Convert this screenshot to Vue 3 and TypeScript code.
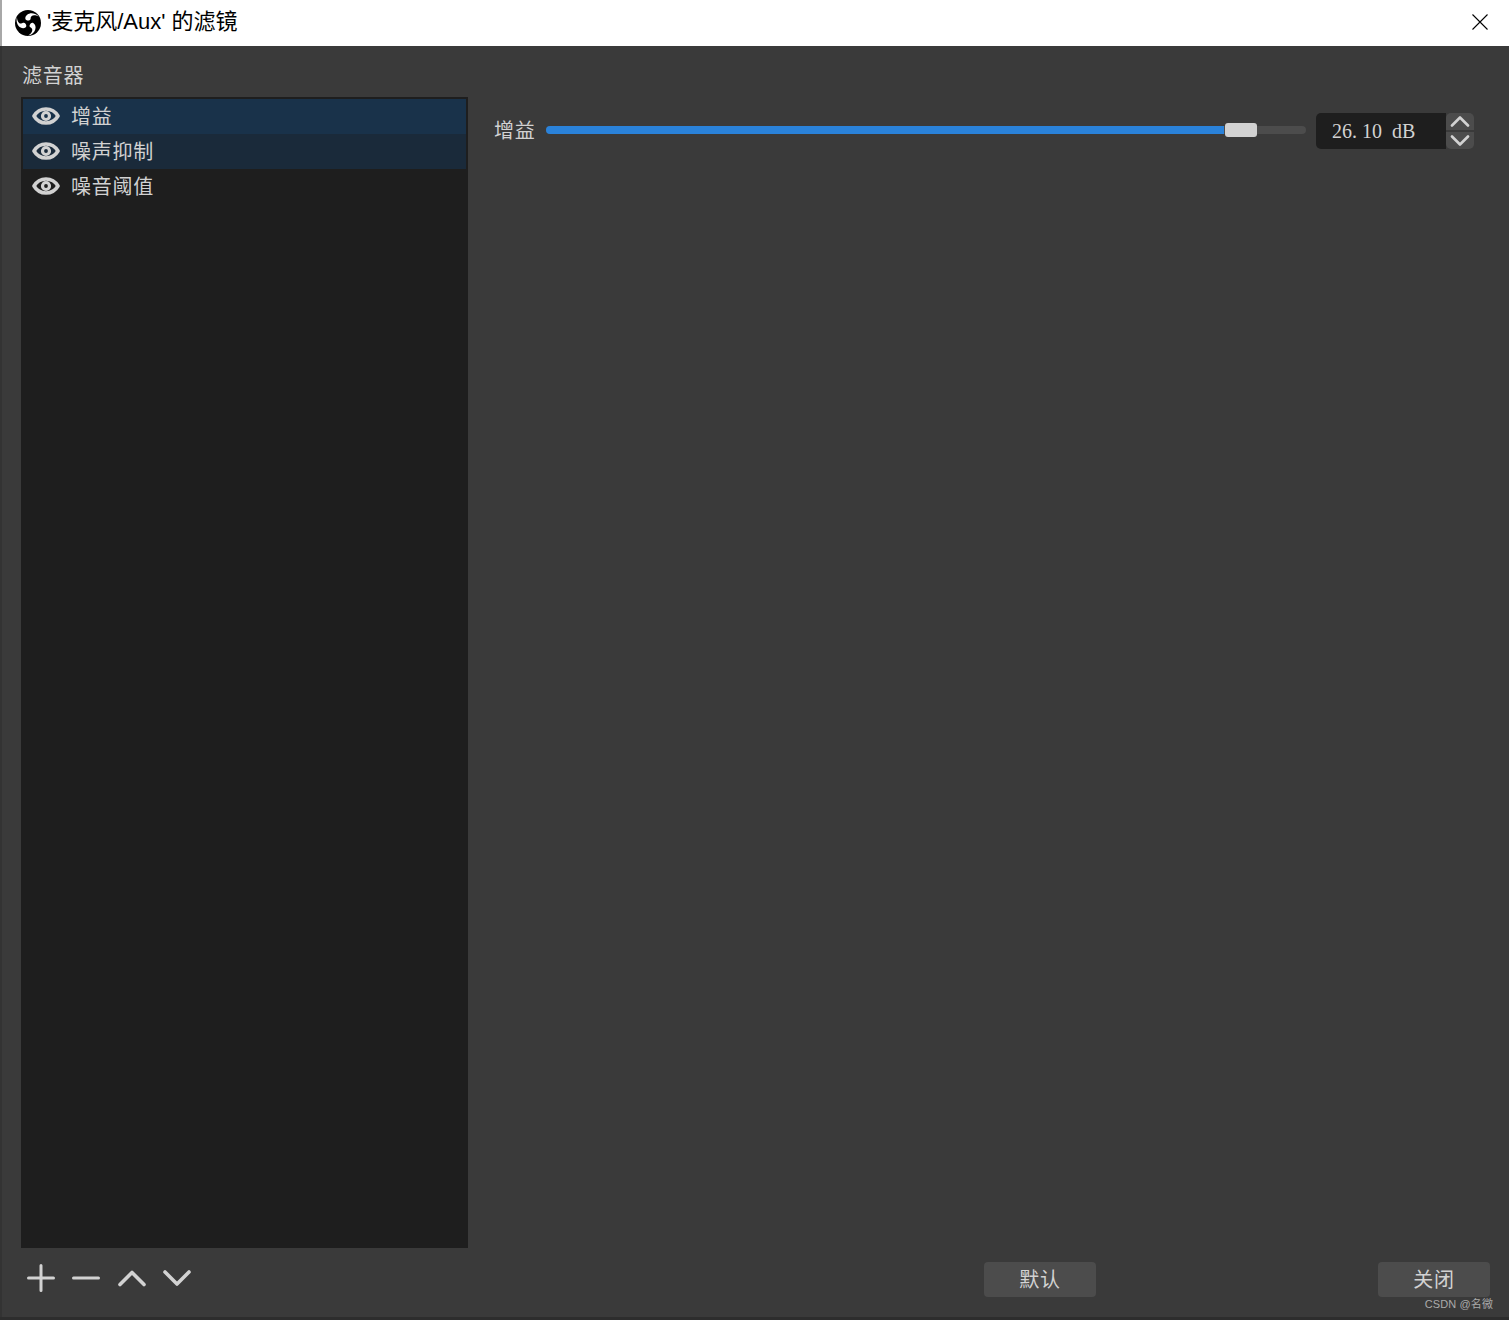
<script setup lang="ts">
import { computed, ref } from 'vue'

interface Filter {
  id: number
  name: string
  state: '' | 'current' | 'selected'
}

const filters = ref<Filter[]>([
  { id: 1, name: '增益', state: 'current' },
  { id: 2, name: '噪声抑制', state: 'selected' },
  { id: 3, name: '噪音阈值', state: '' }
])

const gain = ref(26.1)
const gainMin = -30
const gainMax = 30
const trackWidth = 760
const thumbWidth = 32

const thumbLeft = computed(() => {
  const ratio = (gain.value - gainMin) / (gainMax - gainMin)
  return Math.round((trackWidth - thumbWidth) * ratio) - 2
})

// spinbox text, the source font leaves a gap after the dot
const gainText = computed(() => gain.value.toFixed(2).replace('.', '. ') + '  dB')
</script>

<template>
  <div class="window">
    <header class="titlebar">
      <svg class="logo" viewBox="0 0 26 26" width="26" height="26">
        <circle cx="13" cy="13" r="13" fill="#000" />
        <g fill="#fff">
          <path d="M10.300 8.500C10.500 3.500 18 .8 23.800 6.500 19.500 4.200 15.400 4.800 15.600 8.800 15.500 11.200 10.600 11.200 10.300 8.500Z" />
          <path d="M10.300 8.500C10.500 3.500 18 .8 23.800 6.500 19.500 4.200 15.400 4.800 15.600 8.800 15.500 11.200 10.600 11.200 10.300 8.500Z" transform="rotate(120 13 13)" />
          <path d="M10.300 8.500C10.500 3.500 18 .8 23.800 6.500 19.500 4.200 15.400 4.800 15.600 8.800 15.500 11.200 10.600 11.200 10.300 8.500Z" transform="rotate(240 13 13)" />
        </g>
      </svg>
      <span class="title">'麦克风/Aux' 的滤镜</span>
      <svg class="close" viewBox="0 0 16 16" width="16" height="16">
        <path d="M.5.5l15 15M15.500.5l-15 15" stroke="#000" stroke-width="1.1" fill="none" />
      </svg>
    </header>

    <main class="content">
      <section class="filters">
        <div class="filters-label">滤音器</div>
        <ul class="filter-list">
          <li v-for="f in filters" :key="f.id" class="filter-row" :class="f.state">
            <svg class="eye" viewBox="0 0 28 18" width="28" height="18">
              <path
                fill="none"
                stroke="#d2d2d2"
                stroke-width="3.600"
                stroke-linejoin="round"
                d="M2 9C4.600 4.600 9 2 14 2S23.400 4.600 26 9C23.400 13.400 19 16 14 16S4.600 13.400 2 9Z"
              />
              <circle cx="14" cy="9" r="3.500" fill="none" stroke="#d2d2d2" stroke-width="3.200" />
            </svg>
            <span>{{ f.name }}</span>
          </li>
        </ul>
        <div class="toolbar">
          <svg viewBox="0 0 28 28" width="28" height="28"><path d="M1.500 14h25M14 1.500v25" /></svg>
          <svg viewBox="0 0 28 28" width="28" height="28"><path d="M1.500 14h25" /></svg>
          <svg class="chevron" viewBox="0 0 28 28" width="28" height="28"><path d="M2 20.500L14 8.500l12 12" /></svg>
          <svg class="chevron" viewBox="0 0 28 28" width="28" height="28"><path d="M2 8l12 12L26 8" /></svg>
        </div>
      </section>

      <section class="props">
        <div class="prop-row">
          <label class="prop-label">增益</label>
          <div class="slider">
            <div class="slider-track">
              <div class="slider-fill" :style="{ width: thumbLeft - 1 + 'px' }"></div>
            </div>
            <div class="slider-thumb" :style="{ left: thumbLeft + 'px' }"></div>
          </div>
          <div class="spin">
            <span class="spin-value">{{ gainText }}</span>
            <div class="spin-btns">
              <button class="spin-btn">
                <svg viewBox="0 0 20 11" width="20" height="11"><path d="M2 9.500l8-8 8 8" /></svg>
              </button>
              <button class="spin-btn">
                <svg viewBox="0 0 20 11" width="20" height="11"><path d="M2 1.500l8 8 8-8" /></svg>
              </button>
            </div>
          </div>
        </div>
        <div class="spacer"></div>
        <footer class="actions">
          <button class="btn">默认</button>
          <button class="btn">关闭</button>
        </footer>
      </section>
    </main>

    <div class="watermark">CSDN @名微</div>
  </div>
</template>

<style scoped>
.window {
  position: relative;
  display: flex;
  flex-direction: column;
  width: 1509px;
  height: 1320px;
  overflow: hidden;
  background: #3a3a3a;
  color: #d2d2d2;
  font-family: "Liberation Sans", "Noto Sans CJK SC", sans-serif;
  font-size: 20px;
  letter-spacing: 0.75px;
  box-sizing: border-box;
  border-bottom: 3px solid #2d2d2d;
}

.titlebar {
  flex: none;
  display: flex;
  align-items: center;
  height: 46px;
  padding: 0 20px 0 15px;
  background: #fff;
  box-sizing: border-box;
  border-left: 2px solid #a8a8a8;
}

.logo {
  flex: none;
  margin-left: -2px;
  margin-top: -1px;
}

.title {
  flex: 1;
  margin-left: 6px;
  margin-top: -8px;
  font-size: 22px;
  letter-spacing: 0;
  color: #000;
  white-space: pre;
}

.close {
  flex: none;
  margin-top: -3px;
  margin-left: -1px;
  margin-right: 1px;
}

.content {
  flex: 1;
  min-height: 0;
  display: grid;
  grid-template-columns: 447px 1fr;
  padding: 0 19px 0 19px;
  border-left: 2px solid #333;
}

.filters {
  display: flex;
  flex-direction: column;
  min-height: 0;
}

.filters-label {
  flex: none;
  display: flex;
  align-items: center;
  height: 51px;
  padding: 9px 0 0 1px;
  box-sizing: border-box;
  line-height: 1;
}

.filter-list {
  flex: 1;
  margin: 0;
  padding: 2px;
  list-style: none;
  background: #1e1e1e;
  box-sizing: border-box;
  border: 0;
  min-height: 0;
}

.filter-row {
  display: flex;
  align-items: center;
  gap: 11px;
  height: 35px;
  padding-left: 9px;
}

.filter-row span {
  margin-top: -2px;
}

.filter-row.current {
  background: #19324a;
}

.filter-row.selected {
  background: #1a2a3a;
}

.eye {
  flex: none;
  margin-top: -1px;
}

.toolbar {
  flex: none;
  display: flex;
  align-items: center;
  gap: 17px;
  height: 69px;
  padding: 0 0 9px 6px;
  box-sizing: border-box;
}

.toolbar svg path {
  fill: none;
  stroke: #d2d2d2;
  stroke-width: 3;
  stroke-linecap: round;
  stroke-linejoin: round;
}

.toolbar svg.chevron {
  transform: translateX(1px);
}

.toolbar svg.chevron path {
  stroke-width: 3.6;
}

.props {
  display: flex;
  flex-direction: column;
  min-width: 0;
  padding-top: 67px;
}

.prop-row {
  flex: none;
  display: flex;
  align-items: center;
  gap: 10px;
  height: 36px;
  padding: 0 16px 0 26px;
}

.prop-label {
  flex: none;
  width: 42px;
  line-height: 1;
}

.slider {
  position: relative;
  flex: none;
  width: 760px;
  height: 14px;
  margin-top: -2px;
}

.slider-track {
  position: absolute;
  inset: 3px 0;
  border-radius: 4px;
  background: #4c4c4c;
  overflow: hidden;
}

.slider-fill {
  height: 100%;
  background: #2a82da;
}

.slider-thumb {
  position: absolute;
  top: 0;
  width: 32px;
  height: 14px;
  border-radius: 3px;
  background: #d2d2d2;
}

.spin {
  flex: none;
  display: flex;
  width: 158px;
  height: 36px;
}

.spin-value {
  flex: 1;
  display: flex;
  align-items: center;
  padding-left: 16px;
  border-radius: 5px 0 0 5px;
  background: #1e1e1e;
  font-family: "Liberation Serif", "Noto Sans CJK SC", serif;
  font-size: 20px;
  letter-spacing: 0;
  white-space: pre;
}

.spin-btns {
  flex: none;
  display: flex;
  flex-direction: column;
  justify-content: space-between;
  width: 28px;
}

.spin-btn {
  display: flex;
  align-items: center;
  justify-content: center;
  height: 17px;
  padding: 0;
  border: 0;
  background: #4c4c4c;
}

.spin-btn:first-child {
  border-radius: 5px 5px 0 0;
}

.spin-btn:last-child {
  border-radius: 0 0 5px 5px;
}

.spin-btn path {
  fill: none;
  stroke: #d2d2d2;
  stroke-width: 2.6;
  stroke-linecap: round;
  stroke-linejoin: round;
}

.spacer {
  flex: 1;
}

.actions {
  flex: none;
  display: flex;
  justify-content: space-between;
  padding: 0 0 20px 516px;
}

.btn {
  width: 112px;
  height: 35px;
  padding: 0;
  border: 0;
  border-radius: 4px;
  background: #4c4c4c;
  color: #d2d2d2;
  font-family: inherit;
  font-size: 20px;
  letter-spacing: 0.75px;
  line-height: 1;
}

.watermark {
  position: absolute;
  right: 16px;
  bottom: 6px;
  color: #aaa;
  font-size: 11px;
  letter-spacing: 0.1px;
  line-height: 14px;
}
</style>

<style>
html,
body {
  margin: 0;
  background: #3a3a3a;
}
</style>
